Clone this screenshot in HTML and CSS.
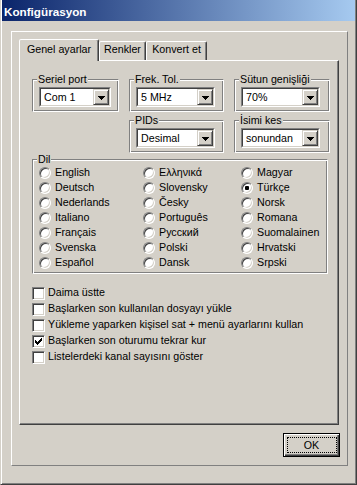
FILE: index.html
```html
<!DOCTYPE html>
<html>
<head>
<meta charset="utf-8">
<link rel="stylesheet" href="styles.css">
</head>
<body>
<div class="window">
  <div class="titlebar">Konfigürasyon</div>
  <div class="panel">
    <div class="tabs">
      <div class="tab active">Genel ayarlar</div>
      <div class="tab t-renkler">Renkler</div>
      <div class="tab t-konvert">Konvert et</div>
    </div>
    <div class="pane">
      <div class="groups">
        <div class="group g-seriel">
          <span class="glabel">Seriel port</span>
          <div class="combo c-short"><div class="combo-in"><span class="ctext">Com 1</span><span class="dd"><svg width="7" height="4" viewBox="0 0 7 4"><path d="M0 0h7v1h-1v1h-1v1h-1v1h-1v-1h-1v-1h-1v-1h-1z"/></svg></span></div></div>
        </div>
        <div class="group g-frek">
          <span class="glabel">Frek. Tol.</span>
          <div class="combo"><div class="combo-in"><span class="ctext">5 MHz</span><span class="dd"><svg width="7" height="4" viewBox="0 0 7 4"><path d="M0 0h7v1h-1v1h-1v1h-1v1h-1v-1h-1v-1h-1v-1h-1z"/></svg></span></div></div>
        </div>
        <div class="group g-sutun">
          <span class="glabel">Sütun genişliği</span>
          <div class="combo"><div class="combo-in"><span class="ctext">70%</span><span class="dd"><svg width="7" height="4" viewBox="0 0 7 4"><path d="M0 0h7v1h-1v1h-1v1h-1v1h-1v-1h-1v-1h-1v-1h-1z"/></svg></span></div></div>
        </div>
        <div class="group g-pids">
          <span class="glabel">PIDs</span>
          <div class="combo"><div class="combo-in"><span class="ctext">Desimal</span><span class="dd"><svg width="7" height="4" viewBox="0 0 7 4"><path d="M0 0h7v1h-1v1h-1v1h-1v1h-1v-1h-1v-1h-1v-1h-1z"/></svg></span></div></div>
        </div>
        <div class="group g-isim">
          <span class="glabel">İsimi kes</span>
          <div class="combo"><div class="combo-in"><span class="ctext">sonundan</span><span class="dd"><svg width="7" height="4" viewBox="0 0 7 4"><path d="M0 0h7v1h-1v1h-1v1h-1v1h-1v-1h-1v-1h-1v-1h-1z"/></svg></span></div></div>
        </div>
      </div>

      <div class="group dil">
        <span class="glabel">Dil</span>
        <div class="radios">
          <div class="ropt"><span class="radio"></span>English</div>
          <div class="ropt"><span class="radio"></span>Deutsch</div>
          <div class="ropt"><span class="radio"></span>Nederlands</div>
          <div class="ropt"><span class="radio"></span>Italiano</div>
          <div class="ropt"><span class="radio"></span>Français</div>
          <div class="ropt"><span class="radio"></span>Svenska</div>
          <div class="ropt"><span class="radio"></span>Español</div>
          <div class="ropt"><span class="radio"></span>Ελληνικά</div>
          <div class="ropt"><span class="radio"></span>Slovensky</div>
          <div class="ropt"><span class="radio"></span>Česky</div>
          <div class="ropt"><span class="radio"></span>Português</div>
          <div class="ropt"><span class="radio"></span>Русский</div>
          <div class="ropt"><span class="radio"></span>Polski</div>
          <div class="ropt"><span class="radio"></span>Dansk</div>
          <div class="ropt"><span class="radio"></span>Magyar</div>
          <div class="ropt"><span class="radio checked"></span>Türkçe</div>
          <div class="ropt"><span class="radio"></span>Norsk</div>
          <div class="ropt"><span class="radio"></span>Romana</div>
          <div class="ropt"><span class="radio"></span>Suomalainen</div>
          <div class="ropt"><span class="radio"></span>Hrvatski</div>
          <div class="ropt"><span class="radio"></span>Srpski</div>
        </div>
      </div>

      <div class="checks">
        <div class="copt"><span class="cbox"></span><span class="ctxt">Daima üstte</span></div>
        <div class="copt"><span class="cbox"></span><span class="ctxt">Başlarken son kullanılan dosyayı yükle</span></div>
        <div class="copt"><span class="cbox"></span><span class="ctxt">Yükleme yaparken kişisel sat + menü ayarlarını kullan</span></div>
        <div class="copt"><span class="cbox"><svg width="7" height="7" viewBox="0 0 7 7"><path d="M0 2h1v3h-1z M1 3h1v3h-1z M2 4h1v3h-1z M3 3h1v3h-1z M4 2h1v3h-1z M5 1h1v3h-1z M6 0h1v3h-1z"/></svg></span><span class="ctxt">Başlarken son oturumu tekrar kur</span></div>
        <div class="copt"><span class="cbox"></span><span class="ctxt">Listelerdeki kanal sayısını göster</span></div>
      </div>
    </div>
    <div class="btnrow">
      <button class="ok">OK</button>
    </div>
  </div>
</div>
</body>
</html>
```
FILE: styles.css
```css
* { box-sizing: border-box; }
html, body { margin: 0; padding: 0; }
body {
  width: 357px;
  height: 485px;
  overflow: hidden;
  background: #D4D0C8;
  font-family: "Liberation Sans", Arial, sans-serif;
  font-size: 10.7px;
  color: #000;
}
.window {
  width: 357px;
  height: 485px;
  border-left: 1px solid #D4D0C8;
  border-right: 1px solid #404040;
  border-bottom: 1px solid #404040;
  box-shadow: inset 1px 0 #fff, inset -1px -1px #808080;
  padding: 0 1px 1px 1px;
}
.titlebar {
  height: 21px;
  background: linear-gradient(to right, #0A246A, #A6CAF0);
  color: #fff;
  font-weight: bold;
  font-size: 11.7px;
  line-height: 14px;
  padding: 5px 0 0 2px;
}
.panel {
  margin: 10px 0 0 9px;
  width: 337px;
  height: 435px;
  border: 1px solid;
  border-color: #fff #808080 #808080 #fff;
  padding: 7px 8px 8px 7px;
  display: flex;
  flex-direction: column;
}
.tabs {
  display: flex;
  align-items: flex-end;
  height: 21px;
}
.tab {
  height: 19px;
  border: 1px solid;
  border-bottom: none;
  border-color: #fff #404040 transparent #fff;
  border-radius: 2px 2px 0 0;
  box-shadow: inset -1px 0 #808080;
  background: #D4D0C8;
  text-align: center;
  line-height: 13px;
  padding-top: 1px;
}
.tab.active {
  width: 80px;
  height: 22px;
  margin-bottom: -1px;
  padding-top: 3px;
  position: relative;
  z-index: 1;
}
.t-renkler { width: 47px; }
.t-konvert { width: 61px; }
.pane {
  width: 320px;
  height: 365px;
  border: 1px solid;
  border-color: #fff #404040 #404040 #fff;
  box-shadow: inset -1px -1px #808080;
  padding: 18px 10px 0 12px;
}
.groups {
  display: grid;
  grid-template-columns: 87px 95px 96px;
  grid-template-rows: 33px 33px;
  column-gap: 10px;
  row-gap: 8px;
}
.group {
  position: relative;
  border: 1px solid;
  border-color: #808080 #fff #fff #808080;
  box-shadow: inset 1px 1px #fff, inset -1px -1px #808080;
  padding: 7px 0 0 6px;
}
.g-seriel { grid-column: 1; grid-row: 1; }
.g-frek { grid-column: 2; grid-row: 1; }
.g-sutun { grid-column: 3; grid-row: 1; }
.g-pids { grid-column: 2; grid-row: 2; }
.g-isim { grid-column: 3; grid-row: 2; }
.glabel {
  position: absolute;
  top: -7px;
  left: 4px;
  padding: 0 1px;
  background: #D4D0C8;
  line-height: 13px;
}
.combo {
  width: 79px;
  height: 20px;
  border: 1px solid;
  border-color: #808080 #fff #fff #808080;
}
.combo.c-short { width: 72px; }
.combo-in {
  height: 100%;
  border: 1px solid;
  border-color: #404040 #D4D0C8 #D4D0C8 #404040;
  background: #fff;
  display: flex;
}
.ctext {
  flex: 1;
  padding-left: 3px;
  line-height: 16px;
  white-space: nowrap;
  overflow: hidden;
}
.dd {
  width: 16px;
  height: 16px;
  border: 1px solid;
  border-color: #D4D0C8 #404040 #404040 #D4D0C8;
  box-shadow: inset 1px 1px #fff, inset -1px -1px #808080;
  background: #D4D0C8;
  display: flex;
  align-items: center;
  justify-content: center;
  padding-top: 1px;
}
.dd svg { display: block; shape-rendering: crispEdges; }
.dil {
  margin-top: 6px;
  width: 296px;
  height: 115px;
  padding: 6px 0 0 6px;
}
.radios {
  display: grid;
  grid-auto-flow: column;
  grid-template-rows: repeat(7, 15px);
  grid-template-columns: 104px 98px 1fr;
}
.ropt {
  display: flex;
  align-items: flex-start;
  line-height: 13px;
  white-space: nowrap;
}
.radio {
  width: 12px;
  height: 12px;
  margin: 1px 4px 0 0;
  flex: none;
  border-radius: 50%;
  border: 1px solid;
  border-color: #808080 #fff #fff #808080;
  box-shadow: inset 1px 1px #404040, inset -1px -1px #D4D0C8;
  background: #fff;
  display: flex;
  align-items: center;
  justify-content: center;
}
.radio.checked::after {
  content: "";
  width: 4px;
  height: 4px;
  border-radius: 1px;
  background: #000;
}
.checks {
  margin-top: 12px;
}
.copt {
  display: flex;
  align-items: flex-start;
  height: 16px;
}
.cbox {
  width: 13px;
  height: 13px;
  margin: 1px 3px 0 0;
  flex: none;
  border: 1px solid;
  border-color: #808080 #fff #fff #808080;
  box-shadow: inset 1px 1px #404040, inset -1px -1px #D4D0C8;
  background: #fff;
  padding: 2px 0 0 2px;
}
.cbox svg { display: block; shape-rendering: crispEdges; }
.ctxt {
  line-height: 13px;
  white-space: nowrap;
}
.btnrow {
  display: flex;
  justify-content: flex-end;
  margin-top: 8px;
}
.ok {
  position: relative;
  width: 57px;
  height: 24px;
  margin-right: -1px;
  border: 1px solid #000;
  background: #D4D0C8;
  box-shadow: inset 1px 1px #fff, inset -1px -1px #404040, inset -2px -2px #808080;
  font-family: "Liberation Sans", Arial, sans-serif;
  font-size: 10.7px;
  color: #000;
  padding: 0;
}
.ok::after {
  content: "";
  position: absolute;
  top: 3px;
  left: 3px;
  right: 2px;
  bottom: 3px;
  border: 1px dotted #000;
}
```
